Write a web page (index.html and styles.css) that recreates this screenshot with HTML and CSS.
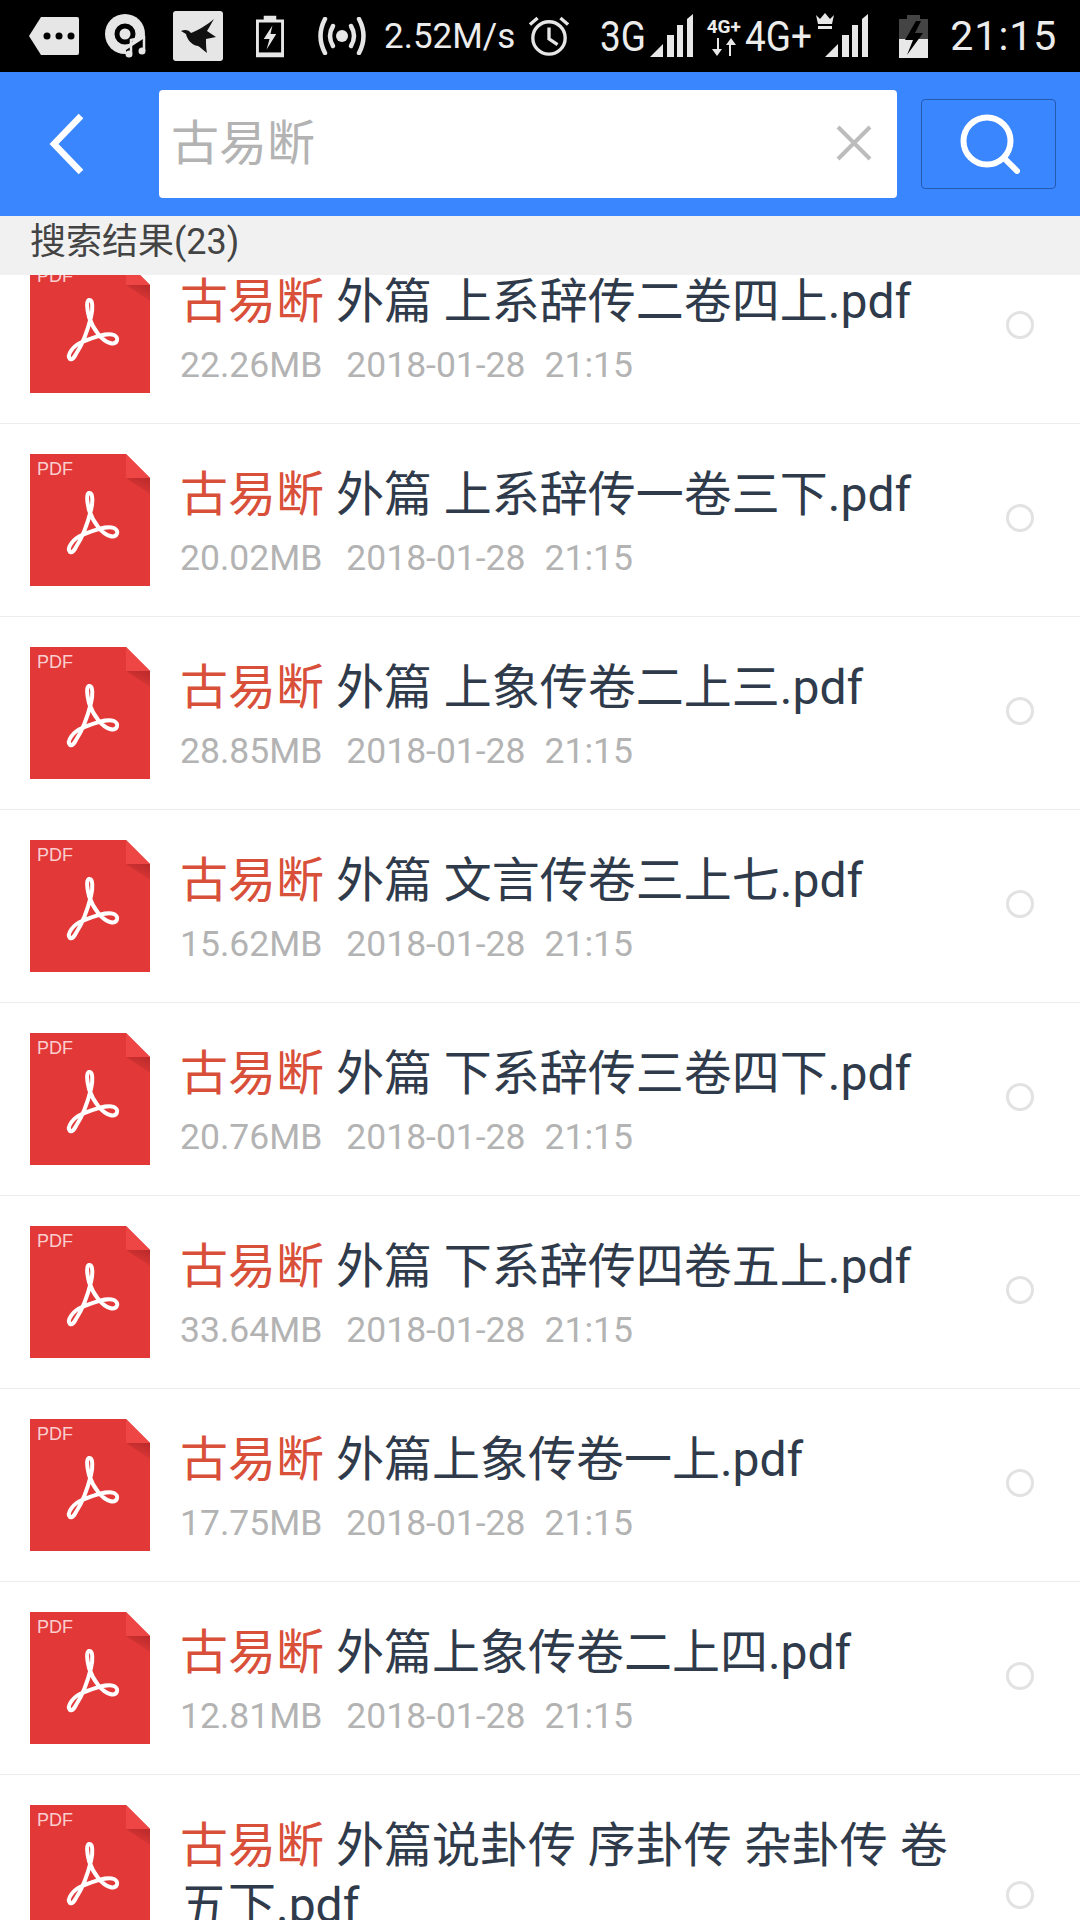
FILE: index.html
```html
<!DOCTYPE html>
<html lang="zh-CN">
<head>
<meta charset="utf-8">
<title>搜索结果</title>
<link rel="stylesheet" href="styles.css">
</head>
<body>
<svg class="defs" width="0" height="0" aria-hidden="true">
  <defs>
    <linearGradient id="foldshade" x1="1" y1="0" x2="0.4" y2="1">
      <stop offset="0" stop-color="#b92a2a"/>
      <stop offset="1" stop-color="#e23838"/>
    </linearGradient>
  </defs>
  <symbol id="pdf" viewBox="0 0 120 132">
    <path d="M0 0H96L120 24V132H0Z" fill="#e23838"/>
    <path d="M96 0L120 24H96Z" fill="#ee4545"/>
    <path d="M96 24H120V40Z" fill="url(#foldshade)"/>
    <path d="M40 98C36 94 44 84 52 81C62 77 76 71 84 74C90 77 87 84 80 82C72 80 63 68 59 56C57 48 56 40 59 39C63 38 63 48 61 56C58 68 52 84 46 93C44 97 42 99 40 98Z" fill="none" stroke="#fff" stroke-width="4" stroke-linejoin="round"/>
  </symbol>
  <symbol id="signal" viewBox="0 0 43 44">
    <path d="M0 43L13 30V43Z" fill="#e8e8e8"/>
    <rect x="17" y="21" width="7" height="22" fill="#e8e8e8"/>
    <rect x="27" y="11" width="6" height="32" fill="#e8e8e8"/>
    <path d="M37 5L43 0V43H37Z" fill="#e8e8e8"/>
  </symbol>
</svg>
<div class="statusbar">
  <svg class="si w50" viewBox="0 0 50 38"><path d="M12 0H48Q50 0 50 2V36Q50 38 48 38H12L0 19Z" fill="#e6e6e6"/><circle cx="18" cy="19" r="3.5"/><circle cx="30" cy="19" r="3.5"/><circle cx="42" cy="19" r="3.5"/></svg>
  <svg class="si w41 ml26" viewBox="0 0 41 46"><circle cx="20" cy="21" r="20" fill="#e6e6e6"/><circle cx="20" cy="21" r="8" fill="none" stroke="#000" stroke-width="5"/><path d="M21 37L41 24V46H21Z" fill="#000"/><path d="M26 40V27L39 24V38" fill="none" stroke="#e6e6e6" stroke-width="2.5"/><circle cx="24" cy="41" r="3.5" fill="#e6e6e6"/><circle cx="37" cy="38" r="3.5" fill="#e6e6e6"/></svg>
  <svg class="si w50b ml27" viewBox="0 0 50 50"><rect width="50" height="50" rx="3" fill="#e6e6e6"/><path d="M8 20C12 18 16 19 18 22C24 20 34 14 41 8C38 13 36 17 34 20L43 26L33 28C33 33 33 38 34 42C30 39 27 36 25 35C18 34 14 28 13 23Z" fill="#111"/></svg>
  <svg class="si w28 ml33" viewBox="0 0 29 43"><path d="M8 0H21V4H29V43H0V4H8Z" fill="#e6e6e6"/><rect x="3" y="7" width="23" height="31" fill="#000"/><path d="M17 10L8 24H14L11 35L21 19H15Z" fill="#e6e6e6"/></svg>
  <svg class="si w50 ml33" viewBox="0 0 50 38"><circle cx="25" cy="19" r="6" fill="#e6e6e6"/><g fill="none" stroke="#e6e6e6" stroke-width="4.5" stroke-linecap="round"><path d="M16 9Q10 19 16 29"/><path d="M34 9Q40 19 34 29"/><path d="M8 2Q-1 19 8 36"/><path d="M42 2Q51 19 42 36"/></g></svg>
  <span class="speed">2.52M/s</span>
  <svg class="si w40 ml14" viewBox="0 0 42 44"><g fill="none" stroke="#e6e6e6" stroke-width="3.5"><circle cx="21" cy="24" r="17"/><path d="M21 13V25L30 31"/><path d="M1 10L9 3"/><path d="M41 10L33 3"/></g></svg>
  <span class="net net3g">3G</span>
  <svg class="sig ml7"><use href="#signal"/></svg>
  <span class="net-stack"><span class="net-small">4G+</span><svg class="arrows" viewBox="0 0 26 18"><path d="M6 0V11H1L6 18L11 11H8V0Z M20 18V7H25L20 0L15 7H18V18Z" fill="#e8e8e8"/></svg></span>
  <span class="net net4g">4G+</span>
  <span class="crown-sig">
    <svg class="crown" viewBox="0 0 20 17"><path d="M1 2L5 6L10 0L15 6L19 2L17 11H3Z M3 13H17V16H3Z" fill="#e8e8e8"/></svg>
    <svg class="sig"><use href="#signal"/></svg>
  </span>
  <svg class="si w29 ml31" viewBox="0 0 29 43"><path d="M8 0H21V4H29V43H0V4H8Z" fill="#444"/><path d="M0 24H29V43H0Z" fill="#e8e8e8"/><path d="M17 6L6 25H14L8 40L24 18H16L22 6Z" fill="#000"/></svg>
  <span class="clock">21:15</span>
</div>

<header class="topbar">
  <svg class="back" viewBox="0 0 36 62"><path d="M32 3L5 31L32 59" fill="none" stroke="#fff" stroke-width="6.5"/></svg>
  <div class="searchbox">
    <span class="query">古易断</span>
    <svg class="clear" viewBox="0 0 36 36"><path d="M2 2L34 34M34 2L2 34" stroke="#bcbcbc" stroke-width="4" fill="none"/></svg>
  </div>
  <button class="searchbtn" type="button">
    <svg class="magnifier" viewBox="0 0 60 60"><circle cx="27" cy="27" r="23.5" fill="none" stroke="#fff" stroke-width="6"/><path d="M45 45L57 57" stroke="#fff" stroke-width="6" stroke-linecap="round"/></svg>
  </button>
</header>

<div class="resultbar">搜索结果(23)</div>

<main class="viewport">
  <ul class="list">
    <li class="row">
      <svg class="fileicon"><use href="#pdf"/></svg><span class="pdftag">PDF</span>
      <div class="info"><div class="title"><em>古易断</em> 外篇 上系辞传二卷四上.pdf</div><div class="meta"><span>22.26MB</span><span>2018-01-28</span><span>21:15</span></div></div>
      <span class="radio"></span>
    </li>
    <li class="row">
      <svg class="fileicon"><use href="#pdf"/></svg><span class="pdftag">PDF</span>
      <div class="info"><div class="title"><em>古易断</em> 外篇 上系辞传一卷三下.pdf</div><div class="meta"><span>20.02MB</span><span>2018-01-28</span><span>21:15</span></div></div>
      <span class="radio"></span>
    </li>
    <li class="row">
      <svg class="fileicon"><use href="#pdf"/></svg><span class="pdftag">PDF</span>
      <div class="info"><div class="title"><em>古易断</em> 外篇 上象传卷二上三.pdf</div><div class="meta"><span>28.85MB</span><span>2018-01-28</span><span>21:15</span></div></div>
      <span class="radio"></span>
    </li>
    <li class="row">
      <svg class="fileicon"><use href="#pdf"/></svg><span class="pdftag">PDF</span>
      <div class="info"><div class="title"><em>古易断</em> 外篇 文言传卷三上七.pdf</div><div class="meta"><span>15.62MB</span><span>2018-01-28</span><span>21:15</span></div></div>
      <span class="radio"></span>
    </li>
    <li class="row">
      <svg class="fileicon"><use href="#pdf"/></svg><span class="pdftag">PDF</span>
      <div class="info"><div class="title"><em>古易断</em> 外篇 下系辞传三卷四下.pdf</div><div class="meta"><span>20.76MB</span><span>2018-01-28</span><span>21:15</span></div></div>
      <span class="radio"></span>
    </li>
    <li class="row">
      <svg class="fileicon"><use href="#pdf"/></svg><span class="pdftag">PDF</span>
      <div class="info"><div class="title"><em>古易断</em> 外篇 下系辞传四卷五上.pdf</div><div class="meta"><span>33.64MB</span><span>2018-01-28</span><span>21:15</span></div></div>
      <span class="radio"></span>
    </li>
    <li class="row">
      <svg class="fileicon"><use href="#pdf"/></svg><span class="pdftag">PDF</span>
      <div class="info"><div class="title"><em>古易断</em> 外篇上象传卷一上.pdf</div><div class="meta"><span>17.75MB</span><span>2018-01-28</span><span>21:15</span></div></div>
      <span class="radio"></span>
    </li>
    <li class="row">
      <svg class="fileicon"><use href="#pdf"/></svg><span class="pdftag">PDF</span>
      <div class="info"><div class="title"><em>古易断</em> 外篇上象传卷二上四.pdf</div><div class="meta"><span>12.81MB</span><span>2018-01-28</span><span>21:15</span></div></div>
      <span class="radio"></span>
    </li>
    <li class="row row-tall">
      <svg class="fileicon"><use href="#pdf"/></svg><span class="pdftag">PDF</span>
      <div class="info"><div class="title"><em>古易断</em> 外篇说卦传 序卦传 杂卦传 卷五下.pdf</div></div>
      <span class="radio"></span>
    </li>
  </ul>
</main>
</body>
</html>
```
FILE: styles.css
```css
* { box-sizing: border-box; }
html, body { margin: 0; padding: 0; }
body {
  width: 1080px;
  height: 1920px;
  overflow: hidden;
  background: #fff;
  font-family: Roboto, "Noto Sans CJK SC", sans-serif;
  display: flex;
  flex-direction: column;
}
.defs { position: absolute; }

.statusbar {
  height: 72px;
  flex: none;
  background: #000;
  color: #ececec;
  display: flex;
  align-items: center;
  padding-left: 29px;
}
.si { display: block; flex: none; }
.w50 { width: 50px; height: 38px; }
.w41 { width: 41px; height: 46px; }
.w50b { width: 50px; height: 50px; }
.w28 { width: 28px; height: 43px; }
.w29 { width: 29px; height: 43px; }
.w40 { width: 40px; height: 44px; }
.ml7 { margin-left: 7px; }
.ml14 { margin-left: 14px; }
.ml26 { margin-left: 26px; }
.ml27 { margin-left: 27px; }
.ml31 { margin-left: 31px; }
.ml33 { margin-left: 33px; }
.speed { margin-left: 17px; font-size: 35px; white-space: nowrap; }
.net {
  font-size: 42px;
  white-space: nowrap;
  transform: scaleX(0.88);
  transform-origin: left center;
}
.net3g { width: 43px; margin-left: 31px; flex: none; }
.net4g { width: 69px; margin-left: 2px; flex: none; }
.sig { display: block; width: 43px; height: 44px; flex: none; align-self: center; }
.net-stack {
  width: 39px;
  margin-left: 11px;
  display: flex;
  flex-direction: column;
  align-items: center;
  flex: none;
}
.net-small { font-size: 19px; font-weight: 700; line-height: 22px; white-space: nowrap; }
.arrows { width: 26px; height: 18px; display: block; }
.crown-sig { position: relative; width: 54px; height: 44px; flex: none; display: flex; justify-content: flex-end; }
.crown { position: absolute; left: 1px; top: -1px; width: 20px; height: 17px; }
.clock { margin-left: 22px; font-size: 41px; letter-spacing: 1px; white-space: nowrap; }

.topbar {
  height: 144px;
  flex: none;
  background: #3a86ff;
  display: flex;
  align-items: center;
  padding-left: 49px;
}
.back { width: 36px; height: 62px; flex: none; display: block; }
.searchbox {
  width: 738px;
  height: 108px;
  margin-left: 74px;
  background: #fff;
  border-radius: 4px;
  display: flex;
  align-items: center;
  justify-content: space-between;
  padding: 0 25px 0 12px;
  flex: none;
}
.query { font-size: 48px; line-height: 60px; color: #b3b3b3; margin-top: -1px; }
.clear { width: 36px; height: 36px; display: block; margin-top: -2px; }
.searchbtn {
  width: 135px;
  height: 90px;
  margin-left: 24px;
  background: #3a86ff;
  border: 1px solid #2459ad;
  border-radius: 4px;
  padding: 0;
  display: flex;
  align-items: center;
  justify-content: center;
  flex: none;
}
.magnifier { width: 60px; height: 60px; display: block; margin-left: 3px; }

.resultbar {
  height: 59px;
  flex: none;
  background: #f1f1f1;
  color: #444;
  font-size: 36px;
  line-height: 52px;
  padding-left: 30px;
  position: relative;
  z-index: 1;
}

.viewport { flex: 1; min-height: 0; overflow: hidden; }
.list { list-style: none; margin: -44px 0 0; padding: 0; }
.row {
  position: relative;
  display: flex;
  align-items: center;
  padding: 30px 46px 30px 30px;
  border-bottom: 1px solid #ececec;
  background: #fff;
}
.row-tall { min-height: 245px; }
.fileicon { width: 120px; height: 132px; flex: none; align-self: flex-start; display: block; }
.pdftag {
  position: absolute;
  left: 37px;
  top: 35px;
  font-size: 18px;
  line-height: 20px;
  color: #f9cfcf;
  font-family: "Liberation Sans", sans-serif;
}
.info { flex: 1; min-width: 0; margin-left: 30px; padding-top: 11px; align-self: flex-start; }
.title { font-size: 48px; line-height: 60px; color: #2f3b4b; }
.title em { font-style: normal; color: #d9503a; }
.meta {
  display: flex;
  gap: 19px;
  margin-top: 10px;
  font-size: 35.5px;
  line-height: 46px;
  color: #b3b3b3;
}
.meta span:first-child { margin-right: 5px; }
.radio {
  width: 28px;
  height: 28px;
  border: 3px solid #e2e2e2;
  border-radius: 50%;
  flex: none;
  margin: -4px 0 0 20px;
}
```
